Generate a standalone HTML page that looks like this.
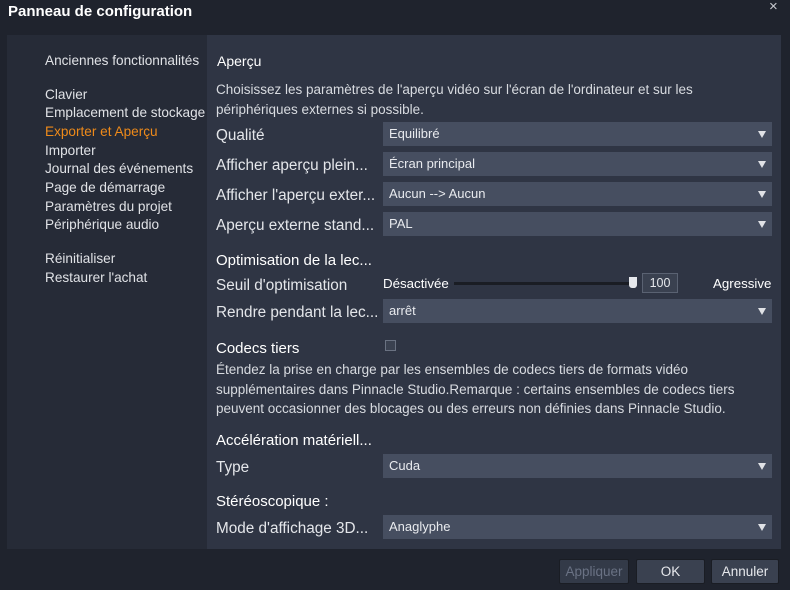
<!DOCTYPE html>
<html><head><meta charset="utf-8"><style>
*{margin:0;padding:0;box-sizing:border-box}
body{width:790px;height:590px;background:#1f232d;font-family:"Liberation Sans",sans-serif;color:#e4e6ea;position:relative;overflow:hidden;font-size:13px}
.a{position:absolute;white-space:nowrap}
.dd{position:absolute;left:383px;width:389px;height:24px;background:#464e60;color:#e8eaee;font-size:13px;line-height:24px;padding-left:6px}
.dd:after{content:"";position:absolute;right:6px;top:9px;border-left:4px solid transparent;border-right:4px solid transparent;border-top:7px solid #e0e2e6}
.lbl{position:absolute;left:216px;font-size:15.3px;color:#e4e6ea}
.h{position:absolute;left:216px;font-size:15px;color:#fff}
.nav{position:absolute;left:45px;font-size:13.6px;color:#e0e2e6}
.p{position:absolute;left:216px;font-size:13.5px;color:#d8dbe0;line-height:19.5px}
.btn{position:absolute;top:559px;height:25px;background:#3a4150;border:1px solid #1a1d24;border-radius:2px;text-align:center;line-height:23px;font-size:13.5px;color:#e6e8ec}
</style></head><body>
<div class="a" style="left:8px;top:3px;font-size:15px;font-weight:bold;color:#fff">Panneau de configuration</div>
<div class="a" style="left:769px;top:-2px;font-size:15px;color:#c8cad0">×</div>
<div class="a" style="left:7px;top:35px;width:200px;height:514px;background:#262b37"></div>
<div class="a" style="left:207px;top:35px;width:574px;height:514px;background:#2f3544"></div>

<div class="nav" style="top:53px">Anciennes fonctionnalités</div>
<div class="nav" style="top:87px">Clavier</div>
<div class="nav" style="top:105px">Emplacement de stockage</div>
<div class="nav" style="top:124px;color:#ee8a1a">Exporter et Aperçu</div>
<div class="nav" style="top:143px">Importer</div>
<div class="nav" style="top:161px">Journal des événements</div>
<div class="nav" style="top:180px">Page de démarrage</div>
<div class="nav" style="top:199px">Paramètres du projet</div>
<div class="nav" style="top:217px">Périphérique audio</div>
<div class="nav" style="top:251px">Réinitialiser</div>
<div class="nav" style="top:270px">Restaurer l'achat</div>

<div class="a" style="left:217px;top:53px;font-size:14px;color:#fff">Aperçu</div>
<div class="p" style="top:80px">Choisissez les paramètres de l'aperçu vidéo sur l'écran de l'ordinateur et sur les<br>périphériques externes si possible.</div>
<div class="lbl" style="top:127px">Qualité</div><div class="dd" style="top:122px">Equilibré</div>
<div class="lbl" style="top:157px">Afficher aperçu plein...</div><div class="dd" style="top:152px">Écran principal</div>
<div class="lbl" style="top:187px">Afficher l'aperçu exter...</div><div class="dd" style="top:182px">Aucun --&gt; Aucun</div>
<div class="lbl" style="top:217px">Aperçu externe stand...</div><div class="dd" style="top:212px">PAL</div>

<div class="h" style="top:252px">Optimisation de la lec...</div>
<div class="lbl" style="top:277px">Seuil d'optimisation</div>
<div class="a" style="left:383px;top:276px;font-size:13.3px;color:#fff">Désactivée</div>
<div class="a" style="left:454px;top:282px;width:180px;height:3px;background:#1a1d24"></div>
<div class="a" style="left:629px;top:277px;width:8px;height:11px;background:#e6e8ec;border-radius:0 0 3px 3px"></div>
<div class="a" style="left:642px;top:273px;width:36px;height:20px;border:1px solid #5a6272;background:#3a4150;text-align:center;line-height:18px;font-size:12.5px;color:#e6e8ec">100</div>
<div class="a" style="left:713px;top:276px;font-size:13.3px;color:#fff">Agressive</div>
<div class="lbl" style="top:304px">Rendre pendant la lec...</div><div class="dd" style="top:299px">arrêt</div>

<div class="h" style="top:340px">Codecs tiers</div>
<div class="a" style="left:385px;top:340px;width:11px;height:11px;border:1px solid #6a7282;background:#3a4150"></div>
<div class="p" style="top:360px">Étendez la prise en charge par les ensembles de codecs tiers de formats vidéo<br>supplémentaires dans Pinnacle Studio.Remarque : certains ensembles de codecs tiers<br>peuvent occasionner des blocages ou des erreurs non définies dans Pinnacle Studio.</div>

<div class="h" style="top:432px">Accélération matériell...</div>
<div class="lbl" style="top:459px">Type</div><div class="dd" style="top:454px">Cuda</div>

<div class="h" style="top:493px">Stéréoscopique :</div>
<div class="lbl" style="top:520px">Mode d'affichage 3D...</div><div class="dd" style="top:515px">Anaglyphe</div>

<div class="btn" style="left:559px;width:70px;color:#6a7284;background:#333a48">Appliquer</div>
<div class="btn" style="left:636px;width:69px">OK</div>
<div class="btn" style="left:711px;width:68px">Annuler</div>
</body></html>
